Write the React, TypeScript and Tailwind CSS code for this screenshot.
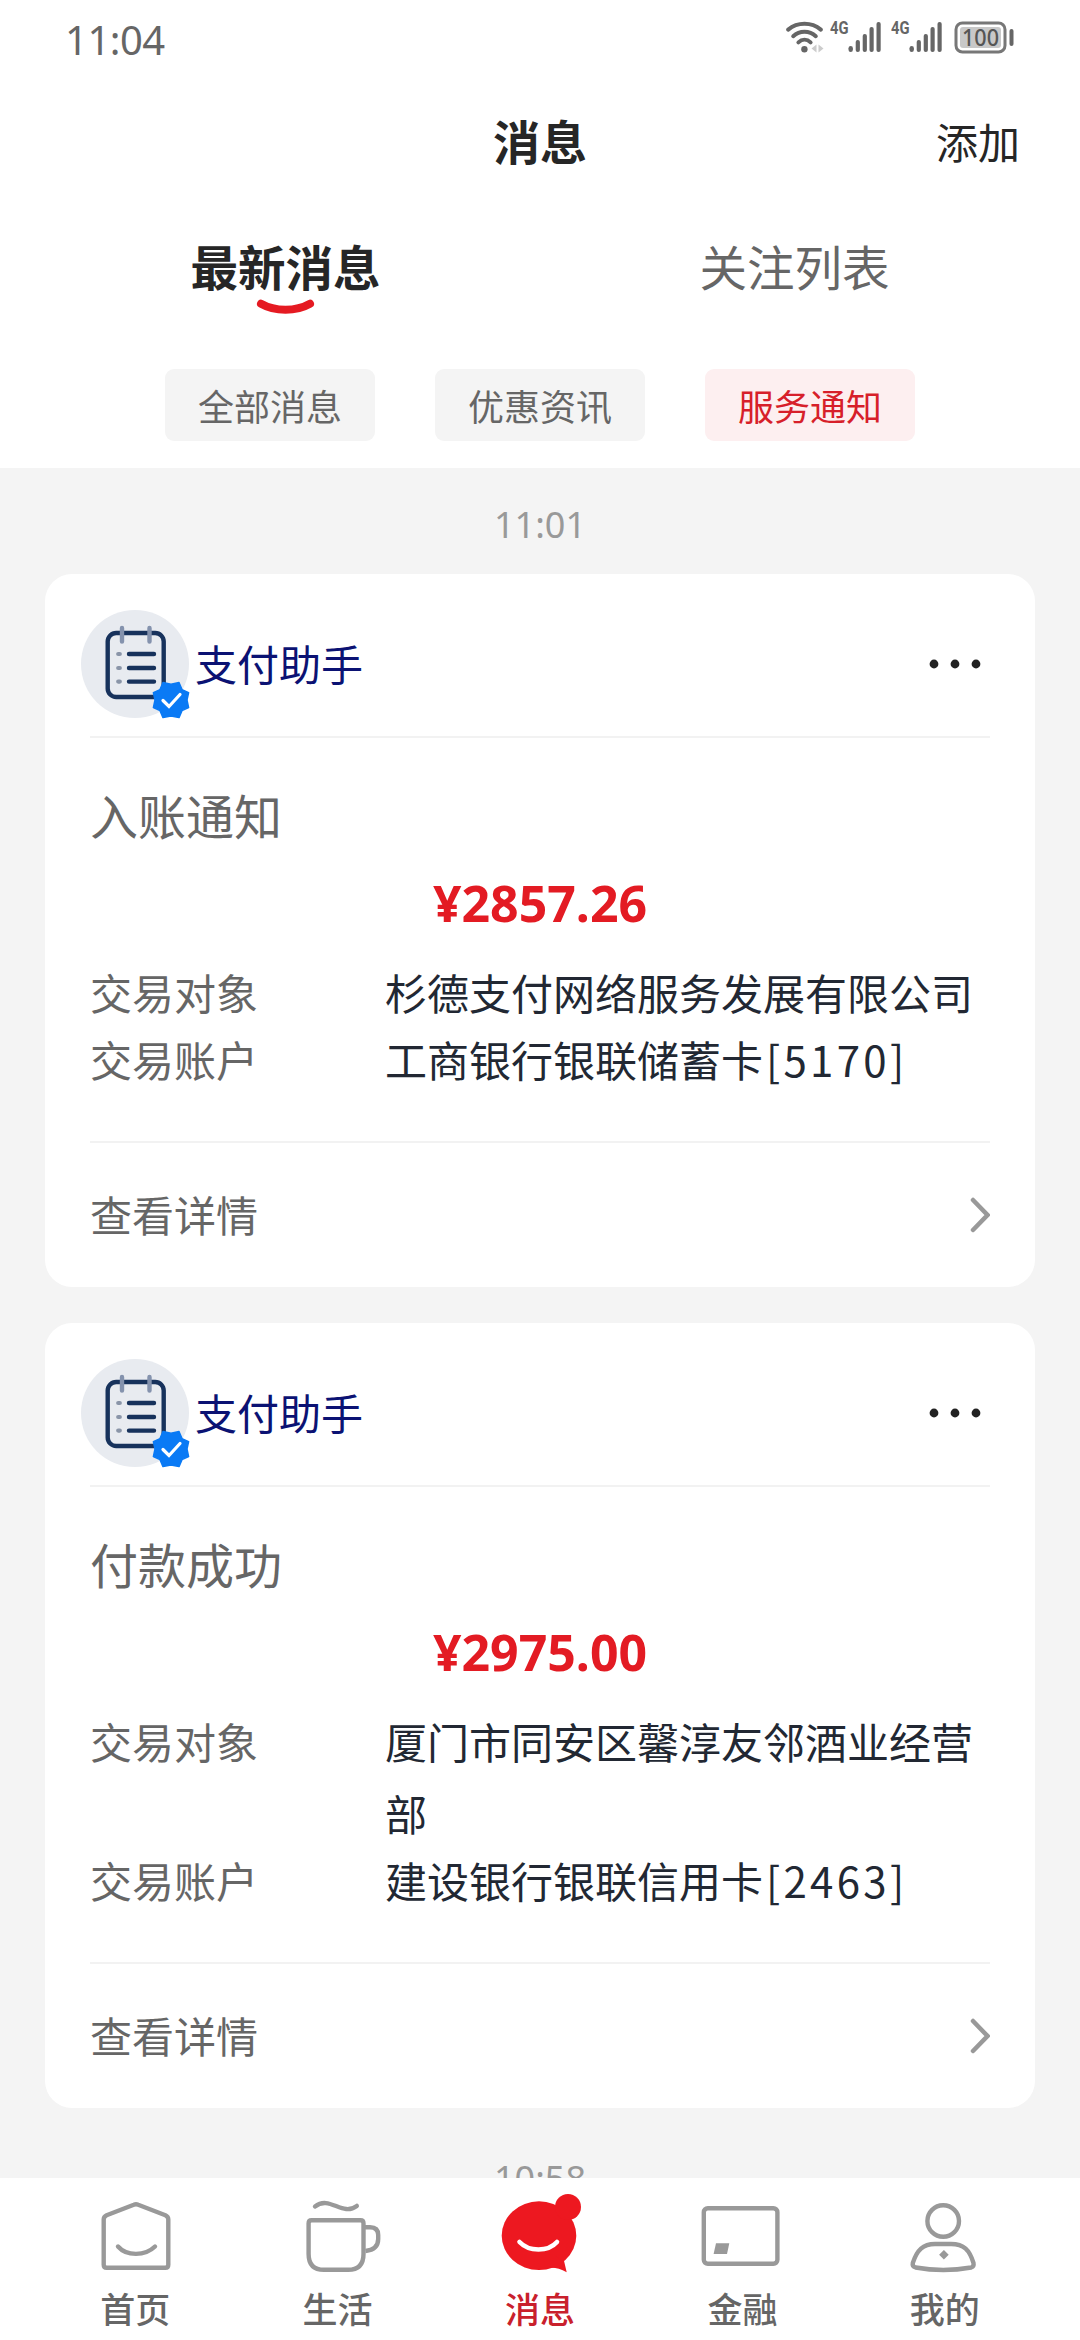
import React from "react";

interface Row {
  label: string;
  value: string;
  tail?: string;
}

interface Notice {
  title: string;
  amount: string;
  rows: Row[];
}

const notices: Notice[] = [
  {
    title: "入账通知",
    amount: "¥2857.26",
    rows: [
      { label: "交易对象", value: "杉德支付网络服务发展有限公司" },
      { label: "交易账户", value: "工商银行银联储蓄卡", tail: "[5170]" },
    ],
  },
  {
    title: "付款成功",
    amount: "¥2975.00",
    rows: [
      { label: "交易对象", value: "厦门市同安区馨淳友邻酒业经营部" },
      { label: "交易账户", value: "建设银行银联信用卡", tail: "[2463]" },
    ],
  },
];

const filters = [
  { label: "全部消息", active: false },
  { label: "优惠资讯", active: false },
  { label: "服务通知", active: true },
];

function SignalIcon() {
  return (
    <span className="relative flex h-[34px] w-[51px]">
      <span className="absolute -left-px -top-[4px] origin-left scale-x-[0.82] font-['Roboto'] text-[18px] font-bold leading-[24px] text-[#666]">
        4G
      </span>
      <svg width="51" height="34" viewBox="0 0 51 34" fill="#666">
        <rect x="17.5" y="26" width="4.4" height="6" rx="2.2" />
        <rect x="24.7" y="20" width="4.2" height="12" rx="2" />
        <rect x="31.7" y="14" width="4.2" height="18" rx="2" />
        <rect x="38.5" y="7" width="4.2" height="25" rx="2" />
        <rect x="45.5" y="2" width="4.2" height="30" rx="2" />
      </svg>
    </span>
  );
}

function WifiIcon() {
  return (
    <svg width="38" height="34" viewBox="0 0 38 34" fill="none">
      <g stroke="#666" strokeWidth="4" strokeLinecap="round">
        <path d="M2.2 9.6C11.5 1.8 25.5 1.8 34.8 9.6" />
        <path d="M7.2 16.2C13.6 10.3 23.4 10.3 29.8 16.2" />
        <path d="M12.4 22.4C16 19 21 19 24.6 22.4" />
      </g>
      <circle cx="18.4" cy="29.2" r="3.2" fill="#666" />
      <path d="M30.5 24.5v8l-5-4zM32.5 24.5v8l5-4z" fill="#ccc" />
    </svg>
  );
}

function StatusBar() {
  return (
    <div className="flex h-[80px] items-center justify-between pl-[65px] pr-[65px]">
      <span className="font-['Noto_Sans'] text-[40px] leading-[78px] tracking-[-0.5px] text-[#666]">
        11:04
      </span>
      <div className="mt-[-6px] flex items-center">
        <WifiIcon />
        <span className="ml-[7px] flex gap-[10px]">
          <SignalIcon />
          <SignalIcon />
        </span>
        <svg className="ml-[11px]" width="61" height="34" viewBox="0 0 61 34" fill="none">
          <rect x="2" y="3" width="49" height="29" rx="6.5" stroke="#777" strokeWidth="3" />
          <rect x="6" y="7" width="41" height="21" rx="3" fill="#c8c8c8" />
          <rect x="55.5" y="9" width="4" height="17" rx="2" fill="#666" />
          <text
            x="26.5"
            y="26"
            fontFamily="Noto Sans, sans-serif"
            fontSize="24"
            fontWeight="500"
            fill="#555"
            textAnchor="middle"
            textLength="37"
            lengthAdjust="spacingAndGlyphs"
          >
            100
          </text>
        </svg>
      </div>
    </div>
  );
}

function Header() {
  return (
    <header className="h-[468px] bg-white">
      <StatusBar />
      <div className="grid h-[120px] grid-cols-3 items-center px-[60px]">
        <span />
        <h1 className="text-center text-[47px] font-bold text-[#262626]">消息</h1>
        <button className="text-right text-[42px] text-[#262626]">添加</button>
      </div>
      <div className="mt-[2px] grid h-[128px] grid-cols-2 px-[31px] text-center text-[47.5px] leading-[128px]">
        <div className="relative font-bold text-[#262626]">
          最新消息
          <svg
            className="absolute left-1/2 top-[96px] -ml-[30px]"
            width="60"
            height="20"
            viewBox="0 0 60 20"
            fill="none"
          >
            <path
              d="M5 5.8C19 13.8 40 13.8 54 5.8"
              stroke="#e51a22"
              strokeWidth="8"
              strokeLinecap="round"
            />
          </svg>
        </div>
        <div className="text-[#666]">关注列表</div>
      </div>
      <div className="mt-[39px] flex justify-center gap-[60px]">
        {filters.map((f) => (
          <button
            key={f.label}
            className={
              f.active
                ? "h-[72px] w-[210px] rounded-[9px] bg-[#fdeff0] text-[36px] leading-[72px] text-[#d71f2a]"
                : "h-[72px] w-[210px] rounded-[9px] bg-[#f4f4f4] text-[36px] leading-[72px] text-[#666]"
            }
          >
            {f.label}
          </button>
        ))}
      </div>
    </header>
  );
}

function AssistantAvatar() {
  return (
    <svg width="110" height="110" viewBox="0 0 110 110" fill="none">
      <circle cx="54" cy="55" r="54" fill="#e8ebf0" />
      <rect x="26.7" y="24" width="56" height="64" rx="8.5" stroke="#17325c" strokeWidth="4.4" />
      <g stroke="#8492ad" strokeWidth="4.4" strokeLinecap="round">
        <path d="M41 19v13.5M68.5 19v13.5" />
      </g>
      <g stroke="#17325c" strokeWidth="4.4" strokeLinecap="round">
        <path d="M48 45h25M48 59h25M48 72.6h25" />
      </g>
      <g stroke="#8a95a8" strokeWidth="4.2" strokeLinecap="round">
        <path d="M37.2 45h1.6M37.2 59h1.6M37.2 72.6h1.6" />
      </g>
      <path
        d="M90 75.2L98 73.6L101 80.6L107.6 83.6L106 91L107.6 98.6L101 101.6L98 108.6L90 107L82 108.6L79 101.6L72.4 98.6L74 91L72.4 83.6L79 80.6L82 73.6Z"
        fill="#0a7af5"
        stroke="#0a7af5"
        strokeWidth="1.5"
        strokeLinejoin="round"
      />
      <path d="M82 91.5L88 97.5L99 85.5" stroke="#fff" strokeWidth="3.2" strokeLinecap="round" />
    </svg>
  );
}

function NoticeCard({ notice }: { notice: Notice }) {
  return (
    <section className="mx-[45px] mb-[36px] rounded-[27px] bg-white px-[45px]">
      <div className="flex h-[162px] items-center pt-[18px]">
        <div className="-ml-[9px]">
          <AssistantAvatar />
        </div>
        <span className="-mt-[4px] ml-[4px] text-[42px] text-[#0b1273]">支付助手</span>
        <svg className="ml-auto mr-[6px]" width="56" height="12" fill="#222">
          <circle cx="6" cy="6" r="4.4" />
          <circle cx="27" cy="6" r="4.4" />
          <circle cx="48" cy="6" r="4.4" />
        </svg>
      </div>
      <div className="h-[2px] bg-[#f2f2f2]" />
      <h2 className="pt-[44px] text-[48px] leading-[64px] text-[#666]">{notice.title}</h2>
      <p className="pt-[2px] text-center font-['Noto_Sans'] text-[50px] font-bold leading-[110px] text-[#e31b23]">
        {notice.amount}
      </p>
      <div className="-mt-[2px] pb-[51px] text-[42px] leading-[72px]">
        {notice.rows.map((row) => (
          <div key={row.label} className="-mb-[5px] flex">
            <span className="w-[295px] shrink-0 text-[#666]">{row.label}</span>
            <span className="w-[590px] break-all text-[#222833]">
              {row.value}
              {row.tail && <span className="ml-[3px] tracking-[3.3px]">{row.tail}</span>}
            </span>
          </div>
        ))}
      </div>
      <div className="h-[2px] bg-[#f2f2f2]" />
      <div className="flex h-[144px] items-center justify-between text-[42px] text-[#666]">
        <span className="-mt-[3px]">查看详情</span>
        <svg width="22" height="38" viewBox="0 0 22 38" fill="none">
          <path d="M5 4L19.5 19L5 34" stroke="#999" strokeWidth="4.5" strokeLinecap="round" />
        </svg>
      </div>
    </section>
  );
}

function HomeIcon() {
  return (
    <svg width="90" height="90" viewBox="0 0 90 90" fill="none" stroke="#999" strokeWidth="4.4">
      <path
        strokeLinejoin="round"
        d="M43.8 14.8Q46 13.8 48.2 14.8L75.4 25.2Q78.3 26.6 78.3 29.6V74.8Q78.3 77.8 75.3 77.8H16.7Q13.7 77.8 13.7 74.8V29.6Q13.7 26.6 16.6 25.2Z"
      />
      <path d="M28 56.5C36.5 66.3 55 66.3 65 56.5" strokeLinecap="round" />
    </svg>
  );
}

function CupIcon() {
  return (
    <svg width="90" height="90" viewBox="0 0 90 90" fill="none" stroke="#999" strokeWidth="4.4">
      <path d="M22 16.4C37 5 49 27 63.8 15.9" strokeLinecap="round" />
      <path d="M18.6 30.2H67.5Q70.5 30.2 70.5 33.2V64Q70.5 79.8 55 79.8H31Q15.6 79.8 15.6 64V33.2Q15.6 30.2 18.6 30.2Z" />
      <path d="M72 37.2H77Q85.2 37.2 85.2 45V49Q85.2 59.5 72.5 61" />
    </svg>
  );
}

function MessageIcon() {
  return (
    <svg width="90" height="90" viewBox="0 0 90 90" fill="none">
      <ellipse cx="44" cy="45.7" rx="37.3" ry="34.4" fill="#ed1820" />
      <circle cx="73" cy="17" r="13" fill="#ed1820" />
      <path d="M54 78Q62 77 71.7 82.3L69 70.7L60 66Z" fill="#ed1820" />
      <path d="M24.5 52C34 62 53 62 62 52" stroke="#fff" strokeWidth="4.6" strokeLinecap="round" />
    </svg>
  );
}

function CardIcon() {
  return (
    <svg width="90" height="90" viewBox="0 0 90 90" fill="none">
      <rect x="6.8" y="18.2" width="73.6" height="55.6" rx="4" stroke="#999" strokeWidth="4.4" />
      <path d="M19 53.3H32.3L30 64H16.6Z" fill="#999" />
    </svg>
  );
}

function UserIcon() {
  return (
    <svg width="90" height="90" viewBox="0 0 90 90" fill="none" stroke="#999" strokeWidth="4.4">
      <circle cx="43.2" cy="31" r="15.8" />
      <path d="M35 54H51C64 54 69.5 60 73.5 73Q74.2 76.5 71.2 77.5Q43.2 82.5 15.6 77.5Q12 76.5 12.8 73C17 60 23 54 35 54Z" />
      <path d="M43.9 60L48.7 64.8L43.9 69.6L39.1 64.8Z" fill="#999" stroke="none" />
    </svg>
  );
}

const tabs = [
  { label: "首页", icon: <HomeIcon />, active: false },
  { label: "生活", icon: <CupIcon />, active: false },
  { label: "消息", icon: <MessageIcon />, active: true },
  { label: "金融", icon: <CardIcon />, active: false },
  { label: "我的", icon: <UserIcon />, active: false },
];

function TabBar() {
  return (
    <nav className="grid h-[162px] grid-cols-5 bg-white px-[34px]">
      {tabs.map((tab) => (
        <div key={tab.label} className="flex flex-col items-center pt-[12px]">
          {tab.icon}
          <span
            className={
              tab.active
                ? "mt-[2px] text-[35px] font-medium leading-[52px] text-[#c9202c]"
                : "mt-[2px] text-[35px] font-medium leading-[52px] text-[#666]"
            }
          >
            {tab.label}
          </span>
        </div>
      ))}
    </nav>
  );
}

export default function App() {
  return (
    <div className="flex h-[2340px] w-[1080px] flex-col overflow-hidden bg-[#f4f4f4] font-['Noto_Sans_CJK_SC',sans-serif]">
      <Header />
      <main className="min-h-0 flex-1 overflow-hidden">
        <div className="h-[106px] text-center font-['Noto_Sans'] text-[36px] leading-[114px] text-[#999]">
          11:01
        </div>
        {notices.map((notice) => (
          <NoticeCard key={notice.title} notice={notice} />
        ))}
        {/* next timestamp, half hidden under the tab bar */}
        <div className="text-center font-['Noto_Sans'] text-[36px] leading-[70px] text-[#999]">
          10:58
        </div>
      </main>
      <TabBar />
    </div>
  );
}
